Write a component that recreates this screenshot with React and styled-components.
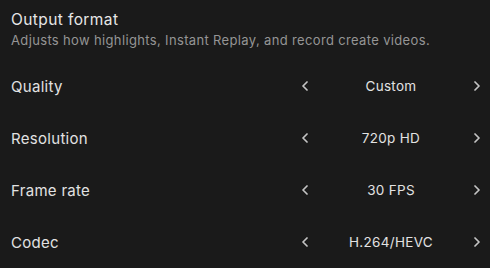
import React from "react";
import styled, { createGlobalStyle } from "styled-components";

const Global = createGlobalStyle`
  html, body { margin: 0; padding: 0; background: #1a1a1a; }
  body { font-family: Inter, "Noto Sans", sans-serif; -webkit-font-smoothing: antialiased; }
`;

const Page = styled.div`
  width: 490px;
  height: 268px;
  background: #1a1a1a;
  box-sizing: border-box;
  padding: 10px 6px 0 11px;
  display: flex;
  flex-direction: column;
`;

const Header = styled.div`
  display: flex;
  flex-direction: column;
  gap: 2px;
  margin-bottom: 11px;
`;

const Title = styled.div`
  color: #e6e6e6;
  font-size: 15.5px;
  letter-spacing: 0.4px;
  line-height: 20px;
`;

const Subtitle = styled.div`
  color: #959595;
  font-size: 13px;
  letter-spacing: 0.35px;
  line-height: 17px;
`;

const Row = styled.div`
  display: flex;
  align-items: center;
  justify-content: space-between;
  height: 52px;
`;

const Label = styled.div`
  color: #e2e2e2;
  font-size: 15px;
  letter-spacing: 0.3px;
`;

const Control = styled.div`
  width: 186px;
  display: flex;
  align-items: center;
`;

const Arrow = styled.button`
  width: 14px;
  height: 20px;
  padding: 0;
  border: 0;
  background: transparent;
  color: #c4c4c4;
  display: flex;
  align-items: center;
  justify-content: center;
  cursor: pointer;
`;

const Value = styled.div`
  flex: 1;
  text-align: center;
  color: #e2e2e2;
  font-size: 13.5px;
  letter-spacing: 0.3px;
`;

const Chevron = ({ dir }) => (
  <svg width="8" height="10" viewBox="0 0 8 10">
    <polyline
      points={dir === "left" ? "6,1 2,5 6,9" : "2,1 6,5 2,9"}
      fill="none"
      stroke="currentColor"
      strokeWidth="1.7"
      strokeLinecap="round"
      strokeLinejoin="round"
    />
  </svg>
);

const rows = [
  ["Quality", "Custom"],
  ["Resolution", "720p HD"],
  ["Frame rate", "30 FPS"],
  ["Codec", "H.264/HEVC"],
];

export default function App() {
  return (
    <>
      <Global />
      <Page>
        <Header>
          <Title>Output format</Title>
          <Subtitle>Adjusts how highlights, Instant Replay, and record create videos.</Subtitle>
        </Header>
        {rows.map(([label, value]) => (
          <Row key={label}>
            <Label>{label}</Label>
            <Control>
              <Arrow aria-label="Previous"><Chevron dir="left" /></Arrow>
              <Value>{value}</Value>
              <Arrow aria-label="Next"><Chevron dir="right" /></Arrow>
            </Control>
          </Row>
        ))}
      </Page>
    </>
  );
}
